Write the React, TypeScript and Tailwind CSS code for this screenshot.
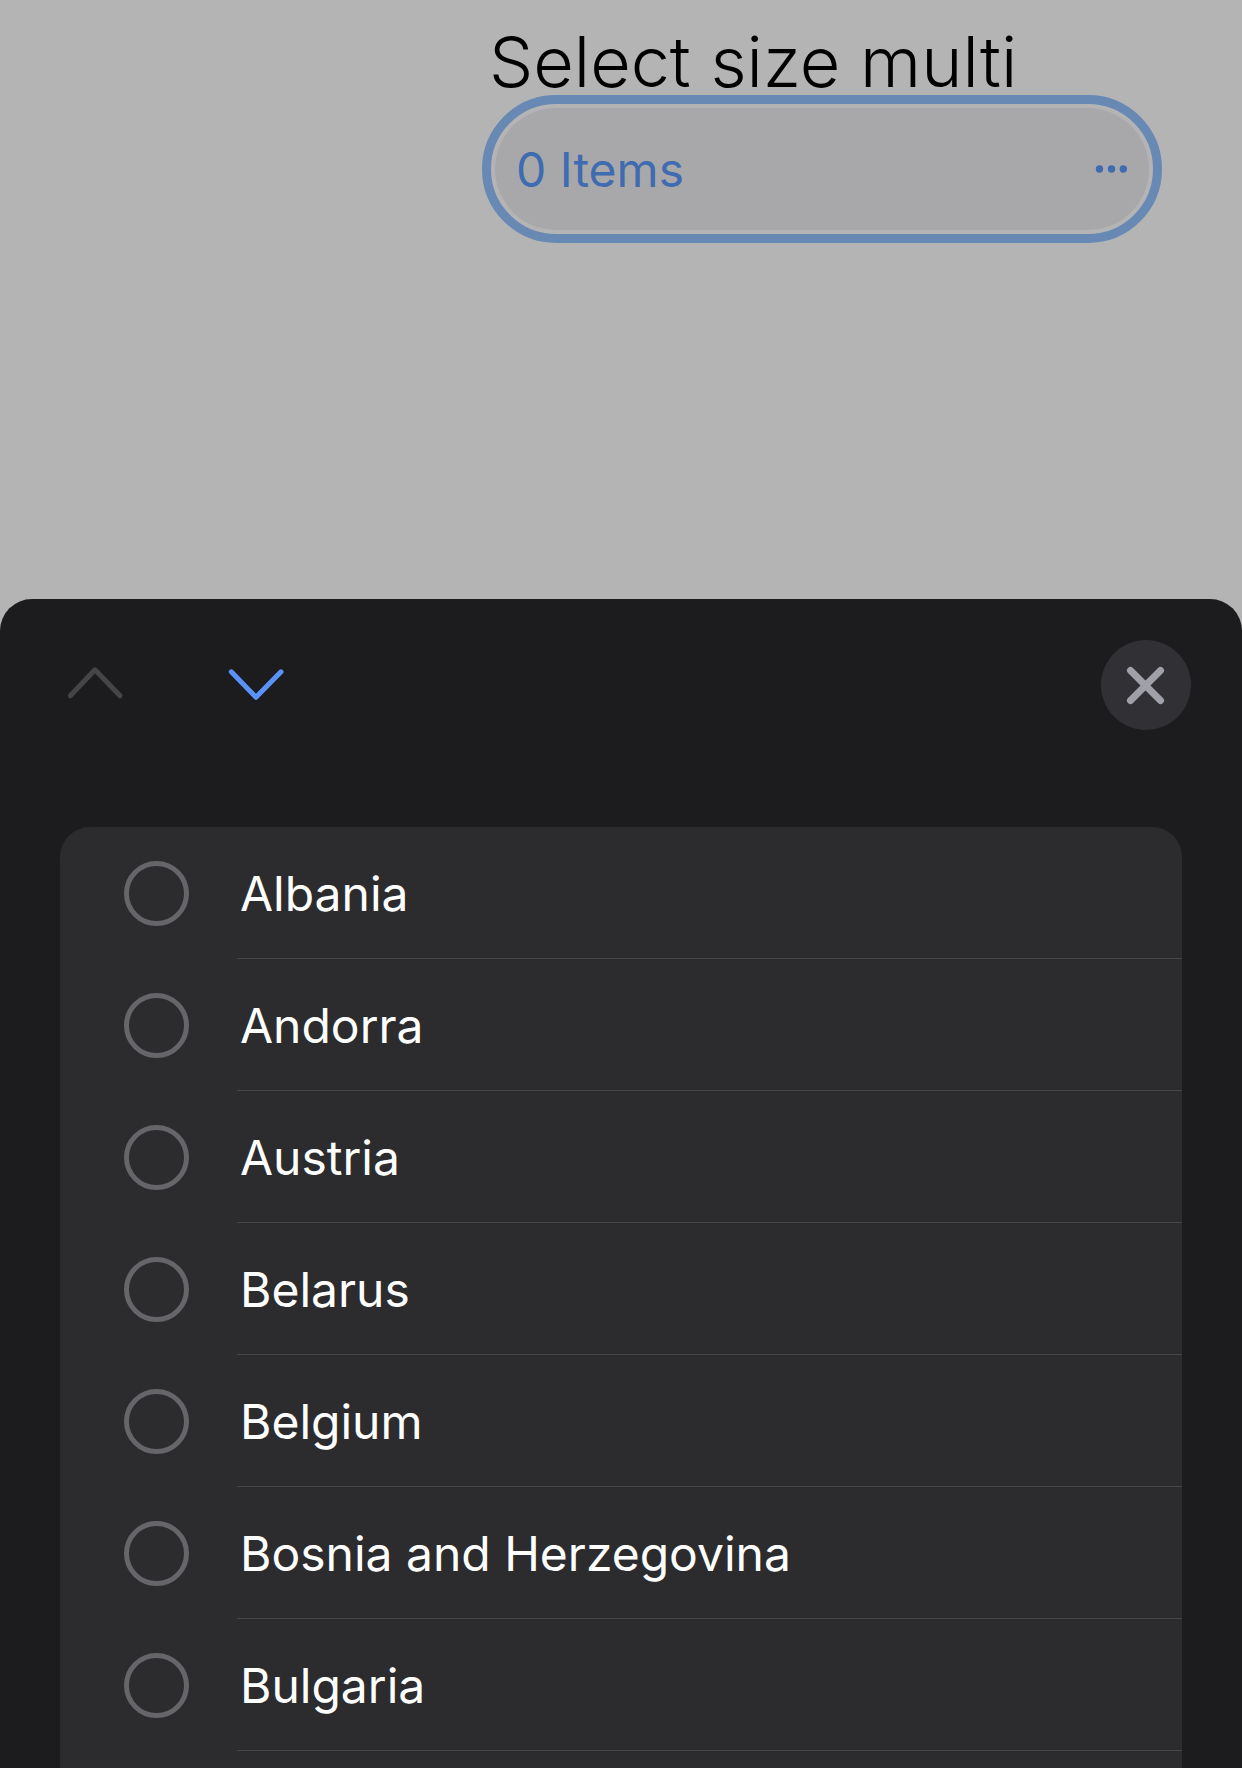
import { useState } from "react";

const countries = [
  "Albania",
  "Andorra",
  "Austria",
  "Belarus",
  "Belgium",
  "Bosnia and Herzegovina",
  "Bulgaria",
];

function SizeField() {
  return (
    <div className="flex h-[599px] flex-col pr-[93px] pl-[495px]">
      <label
        htmlFor="size-multi"
        className="-ml-1.5 pt-5 text-[70px] leading-[84px] font-light whitespace-nowrap text-black"
      >
        Select size multi
      </label>
      <div className="relative mt-1 h-[122px]">
        <select
          id="size-multi"
          className="h-full w-full appearance-none rounded-full bg-[#a8a8aa] pt-0.5 pr-20 pl-[21px] text-[48px] text-[#3f6bb1] outline-9 outline-offset-4 outline-[#6889b3] outline-solid"
        >
          <option>0 Items</option>
        </select>
        <svg
          className="pointer-events-none absolute top-[57px] right-[22px] h-2 w-8"
          viewBox="0 0 32 8"
          fill="#3f6bb1"
          aria-hidden="true"
        >
          <circle cx="4.5" cy="4" r="3.7" />
          <circle cx="16.5" cy="4" r="3.7" />
          <circle cx="28.3" cy="4" r="3.7" />
        </svg>
      </div>
    </div>
  );
}

function SheetToolbar() {
  return (
    <div className="flex h-[90px] items-center justify-between pr-[51px] pl-[65px]">
      <div className="flex gap-[101px]">
        <button type="button" aria-label="Previous" disabled>
          <svg
            className="block h-10 w-[60px]"
            viewBox="0 0 60 40"
            fill="none"
            stroke="#454547"
            strokeWidth="5"
            strokeLinecap="round"
            strokeLinejoin="round"
          >
            <path d="M5.3 30.8 30 4.8 55 30.8" />
          </svg>
        </button>
        <button type="button" aria-label="Next">
          <svg
            className="block h-10 w-[60px]"
            viewBox="0 0 60 40"
            fill="none"
            stroke="#5b92fa"
            strokeWidth="5"
            strokeLinecap="round"
            strokeLinejoin="round"
          >
            <path d="M5.3 6.8 30 32.3 55 6.8" />
          </svg>
        </button>
      </div>
      <button
        type="button"
        aria-label="Close"
        className="flex size-[90px] items-center justify-center rounded-full bg-[#313135]"
      >
        <svg
          className="size-10"
          viewBox="0 0 40 40"
          fill="none"
          stroke="#a0a0a8"
          strokeWidth="7"
          strokeLinecap="round"
        >
          <path d="M4.5 5.5 34.5 35.5M34.5 5.5 4.5 35.5" />
        </svg>
      </button>
    </div>
  );
}

export default function App() {
  const [selected, setSelected] = useState<string[]>([]);
  const toggle = (name: string) =>
    setSelected((current) =>
      current.includes(name)
        ? current.filter((item) => item !== name)
        : [...current, name],
    );

  return (
    <div className="flex min-h-screen flex-col bg-[#b4b4b4] font-['Inter',sans-serif]">
      <SizeField />
      <section
        aria-label="Countries"
        className="flex flex-1 flex-col rounded-t-[32px] bg-[#1c1c1e] pt-[41px]"
      >
        <SheetToolbar />
        <ul className="mx-[60px] mt-[97px] flex-1 rounded-t-[30px] bg-[#2c2c2e]">
          {countries.map((name) => (
            <li key={name}>
              <label className="flex h-[132px] items-center pl-16">
                <input
                  type="checkbox"
                  checked={selected.includes(name)}
                  onChange={() => toggle(name)}
                  className="size-[65px] shrink-0 appearance-none rounded-full border-5 border-[#66656a] checked:bg-[#5b92fa]"
                />
                <span className="ml-12 flex h-full flex-1 items-center border-b border-[#464648] pt-0.5 pl-[3px] text-[48px] whitespace-nowrap text-white">
                  {name}
                </span>
              </label>
            </li>
          ))}
        </ul>
      </section>
    </div>
  );
}
